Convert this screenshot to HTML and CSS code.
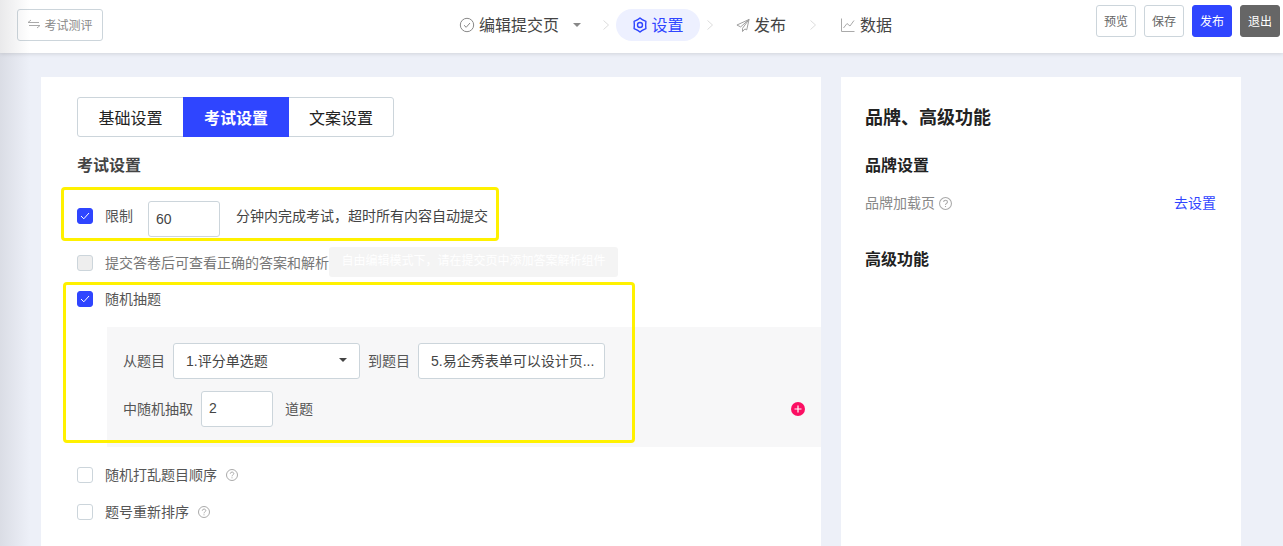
FILE: index.html
```html
<!DOCTYPE html>
<html lang="zh-CN">
<head>
    <meta charset="UTF-8">
    <title>考试设置</title>
    <link rel="stylesheet" href="styles.css">
</head>
<body>

    <header class="topbar">
        <div class="topbar-left">
            <button class="btn back-btn">
                <svg class="back-icon" width="14" height="10" viewBox="0 0 14 10"><path d="M4 1 1 3.500H12M10 9l3-2.500H2" fill="none" stroke="#aaa" stroke-width="1"/></svg>
                考试测评
            </button>
        </div>
        <nav class="steps">
            <div class="step step-edit">
                <svg class="step-icon" width="16" height="16" viewBox="0 0 16 16"><circle cx="8" cy="8" r="6.700" fill="none" stroke="#888" stroke-width="1"/><path d="M5 8.200 7.200 10.300 11 6" fill="none" stroke="#888" stroke-width="1"/></svg>
                <span class="step-text">编辑提交页</span>
                <span class="caret"></span>
            </div>
            <svg class="chevron chevron-1" width="8" height="12" viewBox="0 0 8 12"><path d="M1.500 1.500 6.500 6l-5 4.500" fill="none" stroke="#ddd" stroke-width="1"/></svg>
            <div class="step step-active">
                <svg class="step-icon" width="16" height="16" viewBox="0 0 16 16"><path d="M8 1 Q9.500 2.600 13.900 4.400 Q13.400 8 13.900 11.600 Q9.500 13.400 8 15 Q6.500 13.400 2.100 11.600 Q2.600 8 2.100 4.400 Q6.500 2.600 8 1Z" fill="none" stroke="#2f45ff" stroke-width="1.400" stroke-linejoin="round"/><circle cx="8" cy="8" r="2.500" fill="none" stroke="#2f45ff" stroke-width="1.400"/></svg>
                <span class="step-text">设置</span>
            </div>
            <svg class="chevron chevron-2" width="8" height="12" viewBox="0 0 8 12"><path d="M1.500 1.500 6.500 6l-5 4.500" fill="none" stroke="#ddd" stroke-width="1"/></svg>
            <div class="step step-publish">
                <svg class="step-icon" width="15" height="15" viewBox="0 0 15 15"><path d="M14 1 1 7l4 2 9-8-7 9.500V14l2.500-2.800 2 1z" fill="none" stroke="#999" stroke-width="1" stroke-linejoin="round"/></svg>
                <span class="step-text">发布</span>
            </div>
            <svg class="chevron chevron-3" width="8" height="12" viewBox="0 0 8 12"><path d="M1.500 1.500 6.500 6l-5 4.500" fill="none" stroke="#ddd" stroke-width="1"/></svg>
            <div class="step step-data">
                <svg class="step-icon" width="14" height="14" viewBox="0 0 14 14"><path d="M.5.500V13.500H13.500M2.500 10 6 5.500l3 2.500 4-5.500" fill="none" stroke="#aaa" stroke-width="1"/></svg>
                <span class="step-text">数据</span>
            </div>
        </nav>
        <div class="actions">
            <button class="btn action-btn">预览</button>
            <button class="btn action-btn">保存</button>
            <button class="btn action-btn btn-primary">发布</button>
            <button class="btn action-btn btn-dark">退出</button>
        </div>
    </header>

    <main class="content">
        <section class="panel panel-main">
            <div class="tabs">
                <div class="tab">基础设置</div>
                <div class="tab tab-active">考试设置</div>
                <div class="tab">文案设置</div>
            </div>

            <h3 class="section-title">考试设置</h3>

            <div class="row row-limit">
                <span class="checkbox checked"><svg width="10" height="8" viewBox="0 0 10 8"><path d="M1 4 3.800 6.800 9 1" fill="none" stroke="#fff" stroke-width="1"/></svg></span>
                <span class="label">限制</span>
                <span class="field field-short">60</span>
                <span class="label label-after">分钟内完成考试，超时所有内容自动提交</span>
            </div>

            <div class="row row-answer">
                <span class="checkbox disabled"></span>
                <span class="label">提交答卷后可查看正确的答案和解析</span>
            </div>

            <div class="row row-random">
                <span class="checkbox checked"><svg width="10" height="8" viewBox="0 0 10 8"><path d="M1 4 3.800 6.800 9 1" fill="none" stroke="#fff" stroke-width="1"/></svg></span>
                <span class="label">随机抽题</span>
            </div>

            <div class="random-box">
                <div class="random-inner">
                    <div class="random-line">
                        <span class="label">从题目</span>
                        <div class="field field-select">
                            <span>1.评分单选题</span>
                            <span class="caret caret-dark"></span>
                        </div>
                        <span class="label">到题目</span>
                        <div class="field field-select field-to">5.易企秀表单可以设计页...</div>
                    </div>
                    <div class="random-line">
                        <span class="label">中随机抽取</span>
                        <span class="field field-short field-count">2</span>
                        <span class="label label-unit">道题</span>
                    </div>
                </div>
                <span class="add-btn">
                    <svg width="14" height="14" viewBox="0 0 14 14"><circle cx="7" cy="7" r="7" fill="#fb0f63"/><path d="M3.500 7h7M7 3.500v7" stroke="#fff" stroke-width="1.200"/></svg>
                </span>
            </div>

            <div class="row row-shuffle">
                <span class="checkbox"></span>
                <span class="label">随机打乱题目顺序</span>
                <svg class="help" width="12" height="12" viewBox="0 0 12 12"><circle cx="6" cy="6" r="5.500" fill="none" stroke="#aaa"/><path d="M4.300 4.700C4.300 2.500 7.800 2.600 7.800 4.600 7.800 5.800 6 5.900 6 7.300M6 8.300v1" fill="none" stroke="#aaa"/></svg>
            </div>

            <div class="row row-renumber">
                <span class="checkbox"></span>
                <span class="label">题号重新排序</span>
                <svg class="help" width="12" height="12" viewBox="0 0 12 12"><circle cx="6" cy="6" r="5.500" fill="none" stroke="#aaa"/><path d="M4.300 4.700C4.300 2.500 7.800 2.600 7.800 4.600 7.800 5.800 6 5.900 6 7.300M6 8.300v1" fill="none" stroke="#aaa"/></svg>
            </div>

            <div class="tooltip">自由编辑模式下，请在提交页中添加答案解析组件</div>
            <div class="mark mark-limit"></div>
            <div class="mark mark-random"></div>
        </section>

        <aside class="panel panel-side">
            <h2 class="side-title">品牌、高级功能</h2>
            <h3 class="side-heading">品牌设置</h3>
            <div class="side-row">
                <span class="side-label">品牌加载页
                    <svg class="help" width="12" height="12" viewBox="0 0 12 12"><circle cx="6" cy="6" r="5.500" fill="none" stroke="#aaa"/><path d="M4.300 4.700C4.300 2.500 7.800 2.600 7.800 4.600 7.800 5.800 6 5.900 6 7.300M6 8.300v1" fill="none" stroke="#aaa"/></svg>
                </span>
                <a class="side-link">去设置</a>
            </div>
            <h3 class="side-heading side-heading-adv">高级功能</h3>
        </aside>
    </main>

    <div class="left-shade"></div>

</body>
</html>
```

FILE: styles.css
```css
* {
    box-sizing: border-box;
}

html, body {
    height: 546px;
}

body {
    margin: 0;
    overflow: hidden;
    background-color: #edf0f8;
    color: #333;
    font-family: "Liberation Sans", "Noto Sans CJK SC", sans-serif;
    font-size: 14px;
}

.topbar {
    height: 53px;
    background-color: #fff;
    box-shadow: 0 1px 4px rgba(0, 0, 0, 0.12);
    display: flex;
    justify-content: space-between;
    position: relative;
    z-index: 1;
}

.topbar-left {
    padding: 9px 0 0 17px;
}

.btn {
    font-family: inherit;
    font-size: 12px;
    color: #666;
    background-color: #fff;
    border: 1px solid #ccd5db;
    border-radius: 3px;
    padding: 0 0 2px;
}

.back-btn {
    width: 86px;
    height: 32px;
    display: flex;
    align-items: center;
    justify-content: center;
    gap: 3px;
    color: #888;
}

.steps {
    position: absolute;
    left: 459px;
    top: 9px;
    height: 32px;
    display: flex;
    align-items: center;
    font-size: 16px;
    color: #444;
}

.step {
    display: flex;
    align-items: center;
    gap: 3px;
    white-space: nowrap;
}

.step-text {
    padding-bottom: 3px;
}

.step-edit {
    width: 122px;
    gap: 4px;
}

.caret {
    width: 0;
    height: 0;
    margin-left: 10px;
    border-left: 4.500px solid transparent;
    border-right: 4.500px solid transparent;
    border-top: 4.500px solid #888;
}

.caret-dark {
    margin-left: 0;
    border-left-width: 4px;
    border-right-width: 4px;
    border-top-width: 4px;
    border-top-color: #444;
}

.chevron-1 {
    margin-left: 21px;
    margin-right: 6px;
}

.step-active {
    width: 84px;
    height: 32px;
    justify-content: center;
    background-color: #edf0ff;
    border-radius: 16px;
    color: #2f45ff;
}

.chevron-2 {
    margin-left: 6px;
    margin-right: 22px;
}

.step-publish {
    width: 50px;
    gap: 4px;
}

.chevron-3 {
    margin-left: 23px;
    margin-right: 24px;
}

.step-data {
    gap: 5px;
}

.actions {
    display: flex;
    gap: 8px;
    padding: 5px 3px 0 0;
}

.action-btn {
    width: 40px;
    height: 32px;
}

.btn-primary {
    background-color: #2f45ff;
    border-color: #2f45ff;
    color: #fff;
}

.btn-dark {
    background-color: #666;
    border-color: #666;
    color: #fff;
}

.content {
    display: flex;
    gap: 20px;
    padding: 24px 0 0 41px;
}

.panel {
    background-color: #fff;
    height: 469px;
}

.panel-main {
    width: 780px;
    padding: 20px 0 0 36px;
    position: relative;
}

.tabs {
    display: flex;
    width: 317px;
    height: 40px;
    border: 1px solid #ccd5db;
    border-radius: 3px;
}

.tab {
    width: 105px;
    flex-shrink: 0;
    display: flex;
    align-items: center;
    justify-content: center;
    font-size: 16px;
    padding-bottom: 1px;
    color: #222;
}

.tab:last-child {
    width: 104px;
}

.tab-active {
    width: 106px;
    margin: -1px 0;
    background-color: #2f45ff;
    color: #fff;
    font-weight: bold;
}

.section-title {
    margin: 19px 0 0;
    font-size: 16px;
    line-height: 20px;
    font-weight: bold;
    color: #444;
}

.row {
    display: flex;
    align-items: center;
    gap: 12px;
    height: 20px;
}

.row .label {
    padding-bottom: 3px;
}

.row-limit {
    height: 36px;
    margin-top: 25px;
}

.row-limit .label {
    padding-bottom: 8px;
}

.row-limit .checkbox {
    margin-top: -6px;
}

.row-answer {
    margin-top: 16px;
}

.row-answer .label {
    color: #777;
}

.row-random {
    margin-top: 16px;
}

.row-shuffle {
    margin-top: 18px;
}

.row-renumber {
    margin-top: 17px;
}

.checkbox {
    width: 16px;
    height: 16px;
    flex-shrink: 0;
    border: 1px solid #ccd5db;
    border-radius: 3px;
    background-color: #fff;
    display: flex;
    align-items: center;
    justify-content: center;
}

.checked {
    background-color: #2f45ff;
    border-color: #2f45ff;
}

.disabled {
    background-color: #eee;
}

.label {
    font-size: 14px;
    color: #555;
    white-space: nowrap;
}

.label-after {
    margin-left: 4px;
    color: #444;
}

.random-line .label {
    padding-bottom: 2px;
}

.field {
    height: 36px;
    background-color: #fff;
    border: 1px solid #ccd5db;
    border-radius: 3px;
    display: flex;
    align-items: center;
    font-size: 14px;
    color: #444;
}

.field-short {
    width: 72px;
    margin-left: 3px;
    padding-left: 7px;
}

.random-box {
    width: 714px;
    height: 120px;
    margin: 18px 0 0 30px;
    background-color: #f7f7f8;
    display: flex;
    justify-content: space-between;
    align-items: flex-end;
}

.random-inner {
    width: 640px;
    padding: 16px 0 0 16px;
    align-self: flex-start;
}

.random-line {
    display: flex;
    align-items: center;
    gap: 8px;
    margin-bottom: 12px;
}

.field-select {
    width: 187px;
    padding: 0 12px 2px;
    justify-content: space-between;
}

.field-to {
    padding-right: 0;
    white-space: nowrap;
}

.field-count {
    margin-left: 0;
    padding-bottom: 2px;
}

.label-unit {
    margin-left: 4px;
}

.add-btn {
    display: flex;
    margin: 0 16px 31px 0;
}

.help {
    flex-shrink: 0;
    margin-left: -3px;
    vertical-align: -1px;
}

.side-label .help {
    width: 13px;
    height: 13px;
    margin-left: 0;
    vertical-align: -2px;
}

.tooltip {
    position: absolute;
    left: 288px;
    top: 170px;
    width: 289px;
    height: 30px;
    border-radius: 3px;
    background-color: #f4f4f4;
    color: #fff;
    font-size: 12px;
    line-height: 28px;
    text-align: center;
    white-space: nowrap;
}

.mark {
    position: absolute;
    border: 3px solid #fff100;
    border-radius: 4px;
}

.mark-limit {
    left: 20px;
    top: 110px;
    width: 438px;
    height: 54px;
}

.mark-random {
    left: 22px;
    top: 205px;
    width: 572px;
    height: 161px;
}

.panel-side {
    width: 400px;
    padding: 29px 25px 0 24px;
}

.side-title {
    margin: 0;
    font-size: 18px;
    line-height: 24px;
    font-weight: bold;
    color: #222;
}

.side-heading {
    margin: 26px 0 0;
    font-size: 16px;
    line-height: 20px;
    font-weight: bold;
    color: #222;
}

.side-row {
    display: flex;
    justify-content: space-between;
    align-items: center;
    margin-top: 16px;
    height: 20px;
    font-size: 14px;
}

.side-label {
    color: #888;
}

.side-link {
    color: #2f45ff;
}

.side-heading-adv {
    margin-top: 38px;
}

.left-shade {
    position: absolute;
    left: 0;
    top: 0;
    width: 30px;
    height: 546px;
    z-index: 2;
    pointer-events: none;
    background: linear-gradient(to right, rgba(120, 120, 130, 0.16), rgba(120, 120, 130, 0));
}
```
